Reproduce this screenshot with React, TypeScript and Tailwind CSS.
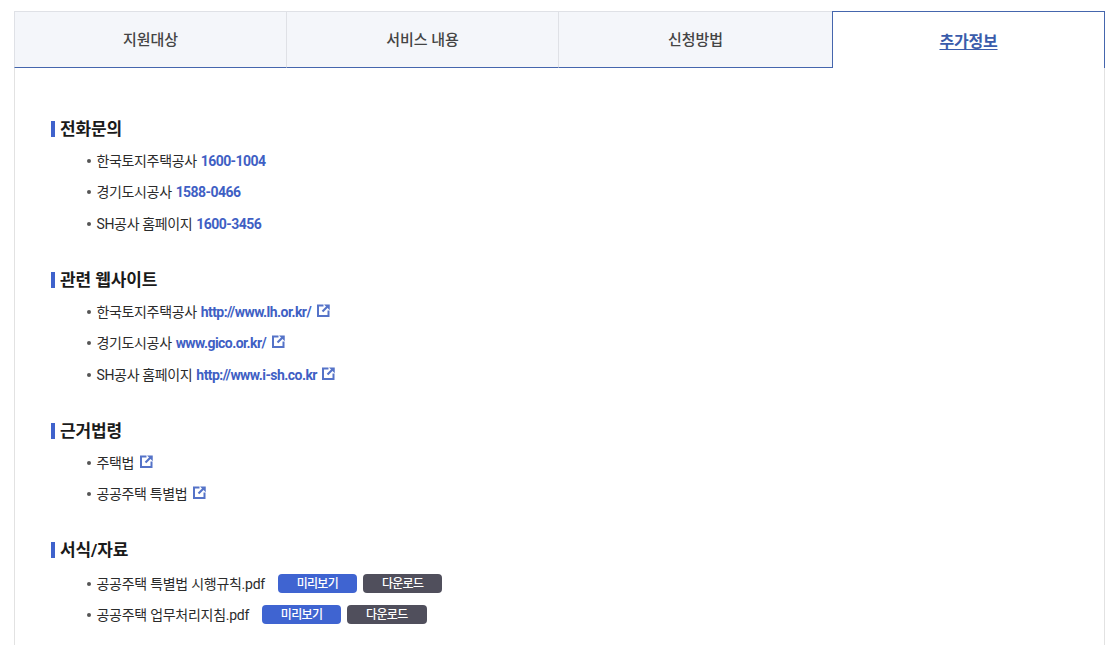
const tabs = ["지원대상", "서비스 내용", "신청방법", "추가정보"];

function LinkIcon() {
  return (
    <svg viewBox="0 0 13 13" className="ml-[5.5px] mb-[4px] w-[13px] h-[13px] shrink-0" fill="none" stroke="#5573c8">
      <path d="M6.5 1.5H1V12H11.5V6.5" strokeWidth="2" />
      <path d="M5.5 7.5L10.5 2.5" strokeWidth="2.2" />
      <path d="M7 0.5H12.75V6.25Z" fill="#5573c8" stroke="none" />
    </svg>
  );
}

function Item({ children }: { children: React.ReactNode }) {
  return (
    <li className="h-[31.5px] flex items-center whitespace-pre">
      <span className="w-[4px] h-[4px] rounded-full bg-[#555] mr-[6px]" />
      <span className="flex items-center pt-[1px] -ml-[0.5px]">{children}</span>
    </li>
  );
}

function Heading({ children }: { children: React.ReactNode }) {
  return (
    <h3 className="h-[32px] flex items-center text-[17px] font-bold text-[#1a1a1a] tracking-[-0.1px]">
      <span className="w-[4px] h-[16px] bg-[#3f62cc] mr-[5px]" />
      <span className="pt-[1px]">{children}</span>
    </h3>
  );
}

function Blue({ children }: { children: React.ReactNode }) {
  return <span className="ml-[1px] font-bold text-[#3f5fc4] tracking-[-0.55px]"> {children}</span>;
}

function FileRow({ name }: { name: string }) {
  return (
    <li className="h-[31px] flex items-center whitespace-pre">
      <span className="w-[4px] h-[4px] rounded-full bg-[#555] mr-[6px]" />
      <span className="pt-[1px] -ml-[0.5px] tracking-[-0.27px]">{name}</span>
      <span className="ml-[13px] w-[79px] h-[19px] rounded-[4px] bg-[#3f64d1] text-white text-[12px] font-medium tracking-[-0.7px] flex items-center justify-center">미리보기</span>
      <span className="ml-[6px] w-[79.5px] h-[19px] rounded-[4px] bg-[#504f5c] text-white text-[12px] font-medium tracking-[-0.7px] flex items-center justify-center">다운로드</span>
    </li>
  );
}

export default function App() {
  return (
    <div className="h-[645px] overflow-hidden bg-white pt-[11px] pl-[14px] w-[1105px] font-['Roboto','Noto_Sans_CJK_KR',sans-serif]">
      <div className="grid grid-cols-[272px_272px_274px_273px] h-[57px]">
        {tabs.map((t, i) =>
          i === 3 ? (
            <div key={t} className="border border-b-0 border-[#4566ad] bg-white flex items-center justify-center pt-[3px] text-[16px] font-bold text-[#3a5cab] tracking-[-0.2px] underline underline-offset-2">
              {t}
            </div>
          ) : (
            <div key={t} className="border-t border-b border-l border-t-[#dfe1e6] border-b-[#4566ad] border-l-[#dfe1e6] bg-[#f4f6fa] flex items-center justify-center pt-[2px] text-[15px] font-medium text-[#444]">
              {t}
            </div>
          )
        )}
      </div>
      <div className="h-[600px] border-x border-[#e2e2e2] pt-[45px] pl-[36px] text-[14px] text-[#2b2b2b] tracking-[-0.35px]">
        <Heading>전화문의</Heading>
        <ul className="pl-[36px] mb-[24.5px]">
          <Item>한국토지주택공사<Blue>1600-1004</Blue></Item>
          <Item>경기도시공사<Blue>1588-0466</Blue></Item>
          <Item>SH공사 홈페이지<Blue>1600-3456</Blue></Item>
        </ul>
        <Heading>관련 웹사이트</Heading>
        <ul className="pl-[36px] mb-[24.5px]">
          <Item>한국토지주택공사<Blue>http://www.lh.or.kr/</Blue><LinkIcon /></Item>
          <Item>경기도시공사<Blue>www.gico.or.kr/</Blue><LinkIcon /></Item>
          <Item>SH공사 홈페이지<Blue>http://www.i-sh.co.kr</Blue><LinkIcon /></Item>
        </ul>
        <Heading>근거법령</Heading>
        <ul className="pl-[36px] mb-[24px]">
          <Item>주택법<LinkIcon /></Item>
          <Item>공공주택 특별법<LinkIcon /></Item>
        </ul>
        <Heading>서식/자료</Heading>
        <ul className="pl-[36px] pt-[2px]">
          <FileRow name="공공주택 특별법 시행규칙.pdf" />
          <FileRow name="공공주택 업무처리지침.pdf" />
        </ul>
      </div>
    </div>
  );
}
